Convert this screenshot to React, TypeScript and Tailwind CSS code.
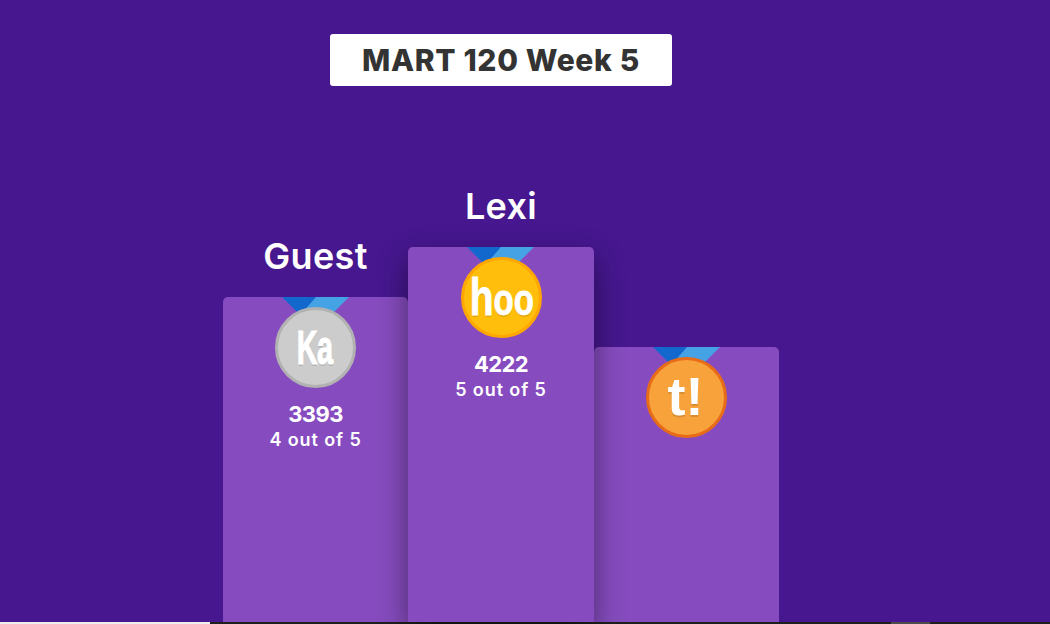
import React from "react";

type P = {
  name?: string;
  h: string;
  medal: string;
  glyph: React.ReactNode;
  score?: string;
  sub?: string;
  w: string;
  mid?: boolean;
};

function Ribbon() {
  return (
    <svg className="absolute top-0 left-1/2 -ml-[36px]" width="70" height="24" viewBox="0 0 70 24">
      <polygon points="2,0 35,0 52,24 26,24" fill="#1368ce" />
      <polygon points="36,0 69,0 45,24 15,24" fill="#45a3e5" />
    </svg>
  );
}

function Column({ name, h, medal, glyph, score, sub, w, mid }: P) {
  return (
    <div className={`${w} flex flex-col items-center ${mid ? "relative z-10" : ""}`}>
      {name && <div className="text-[36px] leading-[54px] mb-[14px] font-semibold text-white tracking-[0.35px]">{name}</div>}
      <div className={`${h} w-full relative bg-[#864cbf] rounded-t-[5px] flex flex-col items-center ${mid ? "shadow-[0_12px_30px_rgba(0,0,0,0.45)]" : ""}`}>
        <Ribbon />
        <div className={`relative mt-[10px] w-[81px] h-[81px] rounded-full border-[3px] flex items-center justify-center overflow-hidden ${medal}`}>
          {glyph}
        </div>
        {score && <div className="mt-[11px] mb-[1px] text-[22px] leading-[30px] font-bold text-white tracking-[-0.6px]">{score}</div>}
        {sub && <div className="text-[18px] leading-[20px] font-semibold text-white tracking-[0.9px]">{sub}</div>}
      </div>
    </div>
  );
}

const glyphText = "font-['Liberation_Sans',sans-serif] font-bold text-white [text-shadow:0_2px_0_rgba(0,0,0,0.12)]";

export default function App() {
  return (
    <div className="h-[624px] w-[1050px] overflow-hidden flex flex-col bg-[#46178f] font-['Inter',sans-serif]">
      <div className="flex-1 w-[1002px] flex flex-col items-center">
        <div className="mt-[34px] w-[342px] h-[52px] bg-white rounded-[3px] flex items-center justify-center text-[30px] font-extrabold text-[#333333] tracking-[0.65px]">
          MART 120 Week 5
        </div>
        <div className="mt-auto flex items-end">
          <Column
            w="w-[185px]"
            name="Guest"
            h="h-[325px]"
            medal="bg-[#cccccc] border-[#b2b2b2]"
            score="3393"
            sub="4 out of 5"
            glyph={<span className={`${glyphText} text-[48px] leading-none inline-block scale-x-[0.6] whitespace-nowrap tracking-[-1px] -ml-[1px] [-webkit-text-stroke:1.2px_white]`}>Ka</span>}
          />
          <Column
            w="w-[186px]"
            mid
            name="Lexi"
            h="h-[375px]"
            medal="bg-[#ffbe0b] border-[#ffa602]"
            score="4222"
            sub="5 out of 5"
            glyph={<span className={`${glyphText} text-[44px] leading-none inline-block scale-x-[0.75] whitespace-nowrap -mt-[2px] ml-[1px] [-webkit-text-stroke:0.8px_white]`}><span className="text-[52px]">h</span>oo</span>}
          />
          <Column
            w="w-[185px]"
            h="h-[275px]"
            medal="bg-[#f7a23b] border-[#e86b17]"
            glyph={<span className={`${glyphText} text-[54px] leading-none inline-block whitespace-nowrap -ml-[2px] -mt-[3px]`}>t!</span>}
          />
        </div>
      </div>
      <div className="h-[2px] flex bg-[#1f1f1f]">
        <div className="w-[210px] bg-[#eeeeee]" />
        <div className="ml-[681px] w-[39px] bg-[#4d4d4d]" />
      </div>
    </div>
  );
}
